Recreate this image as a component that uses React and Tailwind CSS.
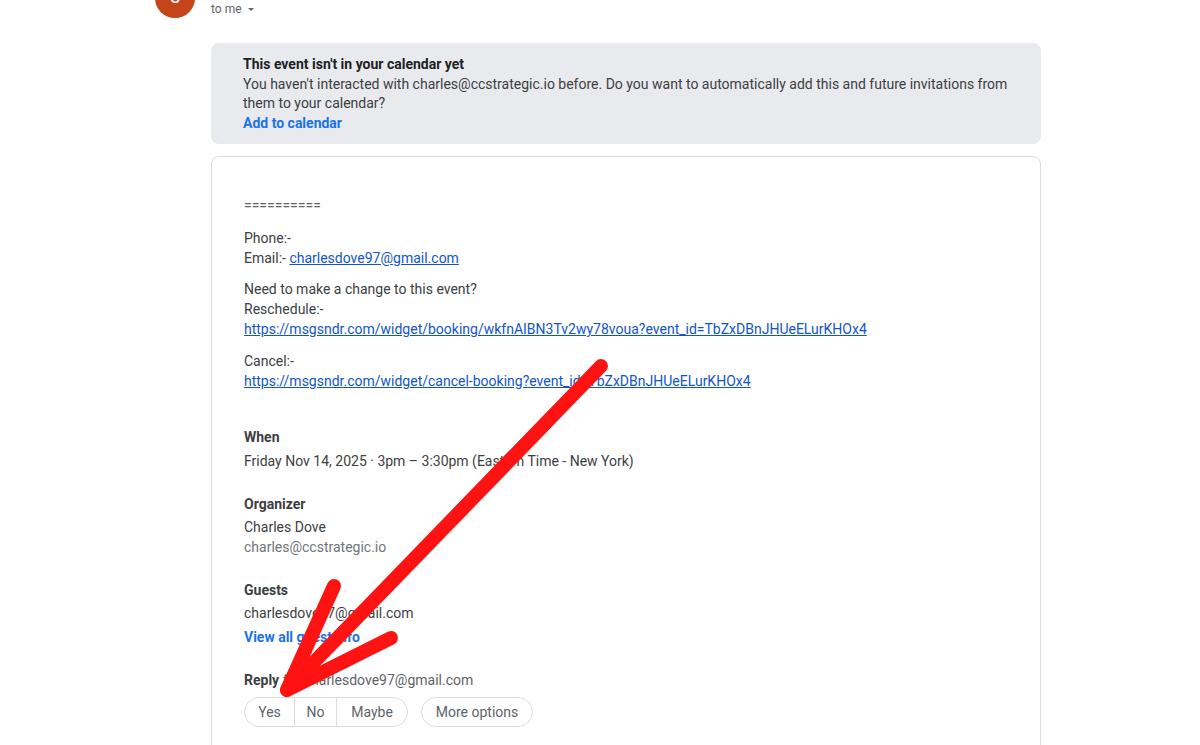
export default function App() {
  return (
    <div className="relative w-[1200px] h-[745px] overflow-hidden bg-white text-[14px] text-[#3c4043]" style={{ fontFamily: 'Roboto, Arial, sans-serif' }}>
      <div className="flex gap-4 pl-[155px]">
        <div className="w-10 h-10 -mt-[22px] rounded-full bg-[#c5441a] flex items-end justify-center pb-[12px] text-white text-[20px] leading-none shrink-0">c</div>
        <div className="w-[830px]">
          <div className="flex items-center gap-1 h-[17px] text-[12px] text-[#5f6368]">
            <span>to me</span>
            <svg width="10" height="10" viewBox="0 0 10 10"><path d="M2 4l3 3 3-3z" fill="#5f6368" /></svg>
          </div>

          <div className="mt-[26px] rounded-lg bg-[#e9eaed] pl-8 pr-6 pt-[12px] pb-[11px] leading-[19.5px]">
            <p className="font-bold text-[#202124]">This event isn't in your calendar yet</p>
            <p>You haven't interacted with charles@ccstrategic.io before. Do you want to automatically add this and future invitations from them to your calendar?</p>
            <p className="font-bold text-[#1a73e8]">Add to calendar</p>
          </div>

          <div className="mt-3 h-[600px] rounded-lg border border-[#dadce0] px-8 pt-[38px] leading-5">
            <p className="text-[#5f6368]">==========</p>

            <div className="mt-[13px]">
              <p>Phone:-</p>
              <p>Email:- <span className="text-[#1155cc] underline">charlesdove97@gmail.com</span></p>
            </div>

            <div className="mt-[11px]">
              <p>Need to make a change to this event?</p>
              <p>Reschedule:-</p>
              <p className="text-[#1155cc] underline">https://msgsndr.com/widget/booking/wkfnAIBN3Tv2wy78voua?event_id=TbZxDBnJHUeELurKHOx4</p>
            </div>

            <div className="mt-3">
              <p>Cancel:-</p>
              <p className="text-[#1155cc] underline">https://msgsndr.com/widget/cancel-booking?event_id=TbZxDBnJHUeELurKHOx4</p>
            </div>

            <div className="mt-9">
              <p className="font-bold">When</p>
              <p className="mt-1">Friday Nov 14, 2025 · 3pm – 3:30pm (Eastern Time - New York)</p>
            </div>

            <div className="mt-[23px]">
              <p className="font-bold">Organizer</p>
              <p className="mt-[3px]">Charles Dove</p>
              <p className="text-[#70757a]">charles@ccstrategic.io</p>
            </div>

            <div className="mt-[23px]">
              <p className="font-bold">Guests</p>
              <p className="mt-[3px]">charlesdove97@gmail.com</p>
              <p className="mt-1 font-bold text-[#1a73e8]">View all guest info</p>
            </div>

            <p className="mt-[23px]"><span className="font-bold">Reply</span> <span className="text-[#5f6368]">for charlesdove97@gmail.com</span></p>

            <div className="mt-[7px] flex items-center gap-[13px]">
              <div className="flex h-[30px] rounded-full border border-[#dadce0] overflow-hidden text-[#5f6368]">
                <span className="w-[50px] flex items-center justify-center border-r border-[#dadce0]">Yes</span>
                <span className="w-[42px] flex items-center justify-center border-r border-[#dadce0]">No</span>
                <span className="w-[70px] flex items-center justify-center">Maybe</span>
              </div>
              <div className="h-[30px] w-[112px] rounded-full border border-[#dadce0] flex items-center justify-center text-[#5f6368]">More options</div>
            </div>
          </div>
        </div>
      </div>

      <svg className="absolute inset-0 pointer-events-none" width="1200" height="745" viewBox="0 0 1200 745">
        <g stroke="#ff1212" strokeWidth="14" strokeLinecap="round" strokeLinejoin="round" fill="none">
          <path d="M601 366 L287 690" />
          <path d="M334 586 L287 690 L391 638" />
        </g>
      </svg>
    </div>
  )
}
